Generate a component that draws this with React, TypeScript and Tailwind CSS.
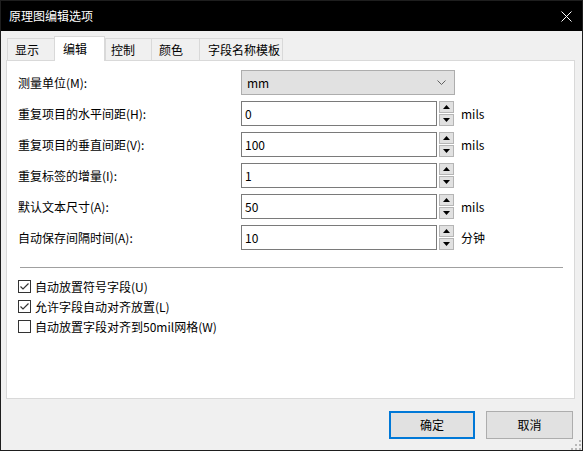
import React from 'react';

const font = { fontFamily: '"Noto Sans CJK SC", "Microsoft YaHei", sans-serif' };

const tabs = [
  { name: '显示', w: 'w-[47px] pl-[7px]' },
  { name: '编辑', w: 'w-[51px] pl-[8px]', active: true },
  { name: '控制', w: 'w-[46px] pl-[5px]' },
  { name: '颜色', w: 'w-[48px] pl-[7px]' },
  { name: '字段名称模板', w: 'w-[84px] pl-[8px] border-r' },
];

const rows = [
  { label: '重复项目的水平间距(H):', value: '0', unit: 'mils' },
  { label: '重复项目的垂直间距(V):', value: '100', unit: 'mils' },
  { label: '重复标签的增量(I):', value: '1', unit: '' },
  { label: '默认文本尺寸(A):', value: '50', unit: 'mils' },
  { label: '自动保存间隔时间(A):', value: '10', unit: '分钟' },
];

const checks = [
  { label: '自动放置符号字段(U)', checked: true },
  { label: '允许字段自动对齐放置(L)', checked: true },
  { label: '自动放置字段对齐到50mil网格(W)', checked: false },
];

function Spinner() {
  return (
    <div className="flex flex-col gap-[1px] ml-[2px] w-[15px]">
      {[0, 1].map((i) => (
        <div key={i} className="h-[12px] bg-[#e1e1e1] border border-[#b5b5b5] flex items-center justify-center">
          <svg width="7" height="4" viewBox="0 0 7 4">
            {i === 0 ? <path d="M0 4 L3.5 0 L7 4 Z" fill="#000" /> : <path d="M0 0 L3.5 4 L7 0 Z" fill="#000" />}
          </svg>
        </div>
      ))}
    </div>
  );
}

export default function App() {
  return (
    <div className="w-[583px] h-[451px] flex flex-col bg-[#f0f0f0] border border-[#1e1e1e] text-[12px] text-black" style={font}>
      {/* Title bar */}
      <div className="h-[30px] bg-black flex items-center justify-between pl-[8px] pr-[10px] shrink-0">
        <span className="text-white text-[12px]">原理图编辑选项</span>
        <svg width="11" height="11" viewBox="0 0 11 11">
          <path d="M0.5 0.5 L10.5 10.5 M10.5 0.5 L0.5 10.5" stroke="#fff" strokeWidth="1" />
        </svg>
      </div>

      {/* Body */}
      <div className="pl-[5px] pr-[7px] pt-[5px]">
        {/* Tabs */}
        <div className="flex items-end h-[24px] ml-px relative z-10">
          {tabs.map((t) =>
            t.active ? (
              <div key={t.name} className={`${t.w} h-[25px] -mb-px bg-white border border-b-0 border-[#d9d9d9] flex items-center`}>
                {t.name}
              </div>
            ) : (
              <div key={t.name} className={`${t.w} h-[22px] bg-[#f0f0f0] border-l border-t border-[#d9d9d9] flex items-center pt-[1px]`}>
                {t.name}
              </div>
            )
          )}
        </div>

        {/* Panel */}
        <div className="h-[339px] bg-white border border-[#d9d9d9] pl-[11px] pr-[11px] pt-[9px] flex flex-col">
          <div className="flex flex-col gap-[6px]">
            <div className="flex items-center h-[25px]">
              <div className="w-[223px]">测量单位(M):</div>
              <div className="w-[214px] h-[25px] bg-[#e1e1e1] border border-[#adadad] flex items-center justify-between pl-[5px] pr-[8px]">
                <span>mm</span>
                <svg width="9" height="5" viewBox="0 0 9 5">
                  <path d="M0.5 0.5 L4.5 4.5 L8.5 0.5" stroke="#606060" fill="none" strokeWidth="1" />
                </svg>
              </div>
            </div>
            {rows.map((r) => (
              <div key={r.label} className="flex items-center h-[25px]">
                <div className="w-[223px]">{r.label}</div>
                <div className="w-[196px] h-[25px] border border-[#7a7a7a] flex items-center pl-[3px]">{r.value}</div>
                <Spinner />
                <span className="ml-[7px]">{r.unit}</span>
              </div>
            ))}
          </div>

          <div className="h-px bg-[#a0a0a0] mt-[17px] ml-[2px] mr-[0px]" />

          <div className="flex flex-col gap-[7px] mt-[12px]">
            {checks.map((c) => (
              <div key={c.label} className="flex items-center h-[13px]">
                <div className="w-[13px] h-[13px] border border-[#333333] bg-white flex items-center justify-center">
                  {c.checked && (
                    <svg width="11" height="11" viewBox="0 0 11 11">
                      <path d="M1.5 5.5 L4 8 L9.5 2.5" stroke="#333" strokeWidth="1.2" fill="none" />
                    </svg>
                  )}
                </div>
                <span className="ml-[4px]">{c.label}</span>
              </div>
            ))}
          </div>
        </div>

        {/* Buttons */}
        <div className="flex justify-end gap-[11px] mt-[12px] pr-[2px]">
          <button className="w-[86px] h-[28px] bg-[#e1e1e1] border-2 border-[#0078d7]">确定</button>
          <button className="w-[87px] h-[28px] bg-[#e1e1e1] border border-[#adadad]">取消</button>
        </div>
      </div>

      {/* Resize grip */}
      <div className="flex justify-end pr-[1px] mt-auto mb-[1px]">
        <svg width="11" height="11" viewBox="0 0 11 11">
          {[
            [9, 1], [9, 5], [5, 5], [9, 9], [5, 9], [1, 9],
          ].map(([x, y]) => (
            <rect key={`${x}-${y}`} x={x} y={y} width="2" height="2" fill="#b8b8b8" />
          ))}
        </svg>
      </div>
    </div>
  );
}
